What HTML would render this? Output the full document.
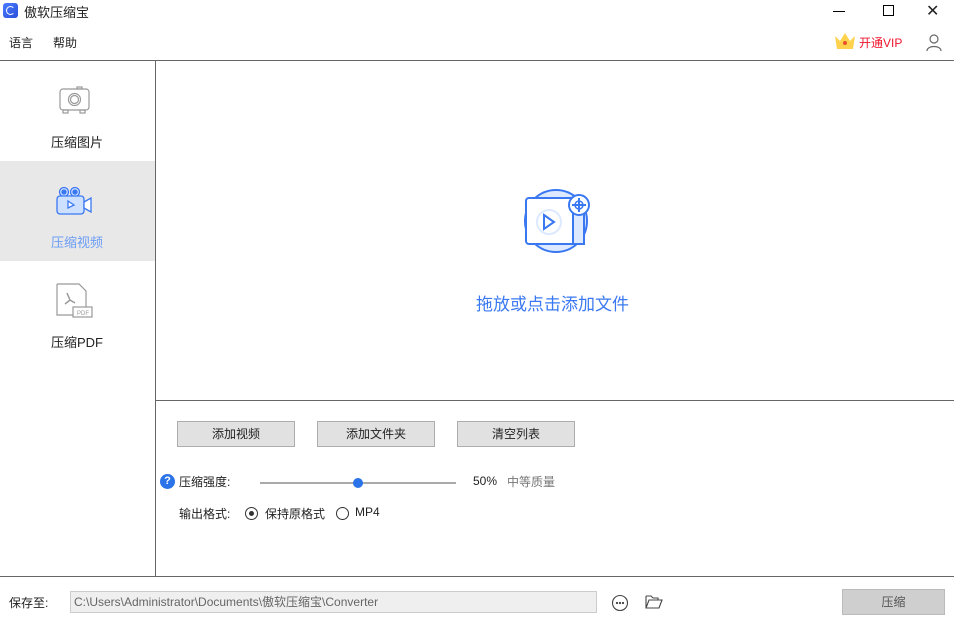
<!DOCTYPE html>
<html><head><meta charset="utf-8"><style>
*{margin:0;padding:0;box-sizing:border-box}
body{width:954px;height:624px;background:#fff;font-family:"Liberation Sans","Noto Sans CJK SC",sans-serif;font-size:12px;color:#222;position:relative;overflow:hidden}
.a{position:absolute}
.btn{position:absolute;top:421px;width:118px;height:26px;background:#e1e1e1;border:1px solid #adadad;text-align:center;line-height:24px;font-size:12px}
</style></head><body>
<div class="a" style="left:3px;top:3px;width:15px;height:15px;border-radius:3px;background:linear-gradient(135deg,#4a7dff,#2a4fd8)"></div>
<div class="a" style="left:6px;top:6px;width:9px;height:9px;border:1.5px solid #fff;border-radius:50%;border-right-color:transparent"></div>
<div class="a" style="left:24px;top:2px;font-size:13px">傲软压缩宝</div>
<div class="a" style="left:833px;top:11px;width:12px;height:1px;background:#000"></div>
<div class="a" style="left:883px;top:5px;width:11px;height:11px;border:1px solid #000"></div>
<div class="a" style="left:926px;top:1px;font-size:16px">✕</div>
<div class="a" style="left:9px;top:34px;font-size:12px">语言</div>
<div class="a" style="left:53px;top:34px;font-size:12px">帮助</div>
<svg class="a" style="left:834px;top:32px" width="22" height="18" viewBox="0 0 22 18"><path d="M1 4 L6 9 L11 1 L16 9 L21 4 L19 17 H3 Z" fill="#ffd24d"/><circle cx="11" cy="11" r="2" fill="#e8512b"/></svg>
<div class="a" style="left:859px;top:34px;color:#f0142d;font-size:12px">开通VIP</div>
<svg class="a" style="left:926px;top:34px" width="16" height="17" viewBox="0 0 16 17" fill="none" stroke="#666" stroke-width="1.2"><circle cx="8" cy="5" r="4"/><path d="M1 17 C1 11 15 11 15 17"/></svg>
<div class="a" style="left:0;top:60px;width:954px;height:1px;background:#666"></div>
<div class="a" style="left:155px;top:61px;width:1px;height:515px;background:#666"></div>
<div class="a" style="left:156px;top:400px;width:798px;height:1px;background:#666"></div>
<div class="a" style="left:0;top:576px;width:954px;height:1px;background:#666"></div>
<svg class="a" style="left:59px;top:86px" width="32" height="30" viewBox="0 0 32 30" fill="none" stroke="#999" stroke-width="1.2"><rect x="1" y="3" width="29" height="21" rx="3"/><circle cx="15.5" cy="13.5" r="6"/><circle cx="15.5" cy="13.5" r="4"/><rect x="18" y="1" width="5" height="2"/><rect x="4" y="24" width="5" height="3"/><rect x="21" y="24" width="5" height="3"/></svg>
<div class="a" style="left:51px;top:132px;font-size:13px">压缩图片</div>
<div class="a" style="left:0;top:161px;width:155px;height:100px;background:#e8e8e8"></div>
<svg class="a" style="left:55px;top:185px" width="40" height="32" viewBox="0 0 40 32" fill="none" stroke="#3a78f2" stroke-width="1.3"><circle cx="9" cy="7" r="4.5" fill="#cde0ff"/><circle cx="20" cy="7" r="4.5" fill="#cde0ff"/><circle cx="9" cy="7" r="2" fill="#3a78f2"/><circle cx="20" cy="7" r="2" fill="#3a78f2"/><rect x="2" y="11" width="27" height="18" rx="3" fill="#cde0ff"/><path d="M29 17 L36 13 V27 L29 23 Z" fill="#fff"/><path d="M13 16 L19 20 L13 23 Z" fill="#fff"/></svg>
<div class="a" style="left:51px;top:232px;font-size:13px;color:#6a9cf5">压缩视频</div>
<svg class="a" style="left:55px;top:283px" width="40" height="36" viewBox="0 0 40 36" fill="none" stroke="#999" stroke-width="1.2"><path d="M2 1 H24 L31 8 V24 M18 32 H2 V1"/><path d="M12 10 L15 17 M10 21 L15 17 L20 20" stroke-width="1.5"/><rect x="18" y="24" width="19" height="10" fill="#fff"/><text x="22" y="32" font-size="6" fill="#999" stroke="none" font-family="Liberation Sans">PDF</text></svg>
<div class="a" style="left:51px;top:332px;font-size:13px">压缩PDF</div>
<svg class="a" style="left:520px;top:188px" width="72" height="68" viewBox="0 0 72 68"><circle cx="36" cy="33" r="31" fill="#dce9ff" stroke="#3a78f2" stroke-width="2"/><rect x="6" y="10" width="58" height="46" rx="3" fill="#fff" stroke="#3a78f2" stroke-width="2"/><rect x="53" y="10" width="11" height="46" fill="#dce9ff" stroke="#3a78f2" stroke-width="2"/><circle cx="29" cy="34" r="12" fill="none" stroke="#dce9ff" stroke-width="2"/><path d="M24 27 L34 34 L24 41 Z" fill="none" stroke="#3a78f2" stroke-width="2"/><circle cx="59" cy="17" r="10" fill="#fff" stroke="#3a78f2" stroke-width="2"/><path d="M59 10 V24 M52 17 H66" stroke="#3a78f2" stroke-width="2"/><circle cx="59" cy="17" r="4" fill="none" stroke="#3a78f2" stroke-width="1.5"/></svg>
<div class="a" style="left:476px;top:290px;font-size:17px;color:#3a78f2">拖放或点击添加文件</div>
<div class="btn" style="left:177px">添加视频</div>
<div class="btn" style="left:317px">添加文件夹</div>
<div class="btn" style="left:457px">清空列表</div>
<div class="a" style="left:160px;top:474px;width:15px;height:15px;border-radius:50%;background:#2a73e8;color:#fff;font-size:11px;font-weight:bold;text-align:center;line-height:15px">?</div>
<div class="a" style="left:179px;top:473px">压缩强度:</div>
<div class="a" style="left:260px;top:482px;width:196px;height:2px;background:#aaa"></div>
<div class="a" style="left:353px;top:478px;width:10px;height:10px;border-radius:50%;background:#2a73e8"></div>
<div class="a" style="left:473px;top:474px">50%</div>
<div class="a" style="left:507px;top:473px;color:#777">中等质量</div>
<div class="a" style="left:179px;top:505px">输出格式:</div>
<div class="a" style="left:245px;top:507px;width:13px;height:13px;border:1px solid #333;border-radius:50%"></div>
<div class="a" style="left:249px;top:511px;width:5px;height:5px;background:#333;border-radius:50%"></div>
<div class="a" style="left:265px;top:505px">保持原格式</div>
<div class="a" style="left:336px;top:507px;width:13px;height:13px;border:1px solid #333;border-radius:50%"></div>
<div class="a" style="left:355px;top:505px">MP4</div>
<div class="a" style="left:9px;top:594px">保存至:</div>
<div class="a" style="left:70px;top:591px;width:527px;height:22px;background:#efefef;border:1px solid #ccc;color:#666;line-height:20px;padding-left:3px">C:\Users\Administrator\Documents\傲软压缩宝\Converter</div>
<svg class="a" style="left:611px;top:594px" width="18" height="18" viewBox="0 0 18 18" fill="none" stroke="#444" stroke-width="1.1"><circle cx="9" cy="9" r="7.5"/><circle cx="6" cy="9" r=".6" fill="#444"/><circle cx="9" cy="9" r=".6" fill="#444"/><circle cx="12" cy="9" r=".6" fill="#444"/></svg>
<svg class="a" style="left:645px;top:594px" width="18" height="16" viewBox="0 0 18 16" fill="none" stroke="#444" stroke-width="1.1"><path d="M1 2 H6 L8 4 H13 V6 M1 2 V14 H14 L17 6 H4 L1 14"/></svg>
<div class="a" style="left:842px;top:589px;width:103px;height:26px;background:#cfcfcf;border:1px solid #bbb;text-align:center;line-height:24px;color:#555">压缩</div>
</body></html>
